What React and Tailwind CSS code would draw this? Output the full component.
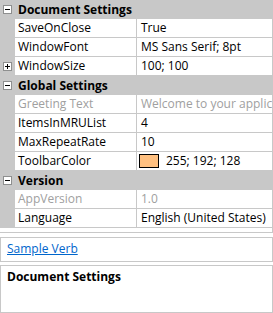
import React from "react";

// Property grid styled like the WinForms PropertyGrid
const LINE = "bg-[#c8c8c8]";

const ExpandBox = ({ open }) => (
  <span className="flex items-center justify-center w-[9px] h-[9px] border border-[#8e8f8f] bg-white">
    <svg width="7" height="7" viewBox="0 0 7 7">
      <rect x="1" y="3" width="5" height="1" fill="#000" />
      {!open && <rect x="3" y="1" width="1" height="5" fill="#000" />}
    </svg>
  </span>
);

const Category = ({ label }) => (
  <div className={`flex h-[19px] shrink-0 ${LINE}`}>
    <div className="w-[15px] flex items-center justify-center shrink-0">
      <ExpandBox open />
    </div>
    <div className="pl-[3px] font-bold leading-[19px] text-black">{label}</div>
  </div>
);

const Row = ({ name, value, disabled, expandable, swatch }) => (
  <div className={`flex h-[19px] shrink-0 ${LINE}`}>
    <div className="w-[15px] flex items-center justify-center shrink-0">
      {expandable && <ExpandBox />}
    </div>
    <div
      className={`w-[121px] h-[18px] bg-white pl-[3px] leading-[18px] shrink-0 overflow-hidden whitespace-nowrap ${
        disabled ? "text-[#a0a0a0]" : "text-black"
      }`}
    >
      {name}
    </div>
    <div
      className={`ml-[1px] flex-1 h-[18px] bg-white leading-[18px] overflow-hidden whitespace-nowrap flex items-center ${
        swatch ? "pl-[2px]" : "pl-[4px]"
      } ${disabled ? "text-[#a0a0a0]" : "text-black"}`}
    >
      {swatch && (
        <span className="w-[20px] h-[14px] border border-black mr-[7px] shrink-0" style={{ background: swatch }} />
      )}
      {value}
    </div>
  </div>
);

export default function App() {
  return (
    <div className="w-[273px] h-[313px] flex flex-col bg-white text-[12px] font-['Segoe_UI','Open_Sans',sans-serif] overflow-hidden">
      <div className="h-[233px] shrink-0 flex flex-col overflow-hidden border-r border-b border-[#c8c8c8]">
        <Category label="Document Settings" />
        <Row name="SaveOnClose" value="True" />
        <Row name="WindowFont" value="MS Sans Serif; 8pt" />
        <Row name="WindowSize" value="100; 100" expandable />
        <Category label="Global Settings" />
        <Row name="Greeting Text" value="Welcome to your application!" disabled />
        <Row name="ItemsInMRUList" value="4" />
        <Row name="MaxRepeatRate" value="10" />
        <Row name="ToolbarColor" value="255; 192; 128" swatch="#ffc080" />
        <Category label="Version" />
        <Row name="AppVersion" value="1.0" disabled />
        <Row name="Language" value="English (United States)" />
      </div>
      <div className="mt-[4px] h-[25px] shrink-0 border border-[#c8c8c8] px-[6px] leading-[22px]">
        <span className="text-[#0066cc] underline cursor-pointer">Sample Verb</span>
      </div>
      <div className="mt-[3px] flex-1 border border-[#c8c8c8] px-[6px] pt-[2px]">
        <div className="font-bold text-black">Document Settings</div>
      </div>
    </div>
  );
}
